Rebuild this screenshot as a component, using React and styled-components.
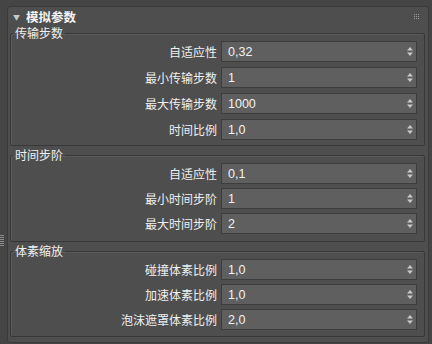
import styled, { createGlobalStyle } from "styled-components";

const GlobalStyle = createGlobalStyle`
    html, body{
        margin: 0;
        background-color: #454545;
    }
    body{
        font-family: "Noto Sans CJK SC", "Noto Sans", sans-serif;
        color: #ececec;
    }
`;

const Wrapper = styled.div`
    position: relative;
    width: 432px;
    height: 344px;
    box-sizing: border-box;
    padding: 6px 3px 1px 7px;
`;

const SideGrip = styled.div`
    position: absolute;
    left: 0;
    top: 235px;
    width: 4px;
    height: 11px;
    background: repeating-linear-gradient(to bottom, #8a8a8a 0 1px, transparent 1px 2px);
`;

const Panel = styled.div`
    height: 100%;
    box-sizing: border-box;
    background-color: #4e4e4e;
    border: 1px solid #3a3a3a;
    border-radius: 3px;
    display: flex;
    flex-direction: column;
`;

const Header = styled.div`
    height: 19px;
    display: flex;
    align-items: center;
    padding: 0 8px 0 5px;
    > .arrow{
        width: 7px;
        font-size: 7px;
        color: #c8c8c8;
        margin-right: 6px;
    }
    > h1{
        margin: 0;
        flex: 1;
        font-size: 12.5px;
        font-weight: bold;
        color: #f4f4f4;
        line-height: 19px;
    }
`;

const Body = styled.div`
    display: flex;
    flex-direction: column;
    gap: 2px;
    padding: 0 3px 0 2px;
`;

const Group = styled.fieldset`
    margin: 0;
    border: 1px solid #383838;
    box-shadow: inset 1px 1px 0 #5a5a5a;
    border-radius: 2px;
    padding: 1px 7px ${p => p.$pb}px 0;
    display: flex;
    flex-direction: column;
    gap: ${p => p.$gap}px;
    > legend{
        margin-left: 2px;
        padding: 0 2px;
        font-size: 12px;
        line-height: 14px;
        color: #f0f0f0;
    }
`;

const Row = styled.div`
    display: flex;
    align-items: center;
    gap: 4px;
    > label{
        flex: 1;
        text-align: right;
        font-size: 12px;
        color: #f0f0f0;
        white-space: nowrap;
    }
`;

const Spinner = styled.div`
    width: 196px;
    height: 21px;
    box-sizing: border-box;
    background-color: #5f5f5f;
    border: 1px solid #3d3d3d;
    display: flex;
    align-items: center;
    padding: 0 3px 0 6px;
    > span{
        flex: 1;
        font-family: "Liberation Sans", sans-serif;
        font-size: 12.5px;
        color: #f2f2f2;
    }
`;

const Arrows = () => (
    <svg width="6" height="9" viewBox="0 0 6 9">
        <path d="M3 0 L6 3.5 L0 3.5 Z" fill="#c9c9c9" />
        <path d="M0 5.5 L6 5.5 L3 9 Z" fill="#c9c9c9" />
    </svg>
);

const Dots = () => (
    <svg width="6" height="6" viewBox="0 0 6 6">
        {[0, 2, 4].map(y => [0, 2, 4].map(x => (
            <rect key={`${x}-${y}`} x={x} y={y} width="1" height="1" fill="#9a9a9a" />
        )))}
    </svg>
);

const groups = [
    {
        title: "传输步数", gap: 5, pb: 5,
        rows: [["自适应性", "0,32"], ["最小传输步数", "1"], ["最大传输步数", "1000"], ["时间比例", "1,0"]],
    },
    {
        title: "时间步阶", gap: 4, pb: 7,
        rows: [["自适应性", "0,1"], ["最小时间步阶", "1"], ["最大时间步阶", "2"]],
    },
    {
        title: "体素缩放", gap: 4, pb: 6,
        rows: [["碰撞体素比例", "1,0"], ["加速体素比例", "1,0"], ["泡沫遮罩体素比例", "2,0"]],
    },
];

function App() {
    return (
        <>
            <GlobalStyle />
            <Wrapper>
                <SideGrip />
                <Panel>
                    <Header>
                        <span className="arrow">▼</span>
                        <h1>模拟参数</h1>
                        <Dots />
                    </Header>
                    <Body>
                        {groups.map(g => (
                            <Group key={g.title} $gap={g.gap} $pb={g.pb}>
                                <legend>{g.title}</legend>
                                {g.rows.map(([label, value]) => (
                                    <Row key={label}>
                                        <label>{label}</label>
                                        <Spinner>
                                            <span>{value}</span>
                                            <Arrows />
                                        </Spinner>
                                    </Row>
                                ))}
                            </Group>
                        ))}
                    </Body>
                </Panel>
            </Wrapper>
        </>
    );
}

export default App;
